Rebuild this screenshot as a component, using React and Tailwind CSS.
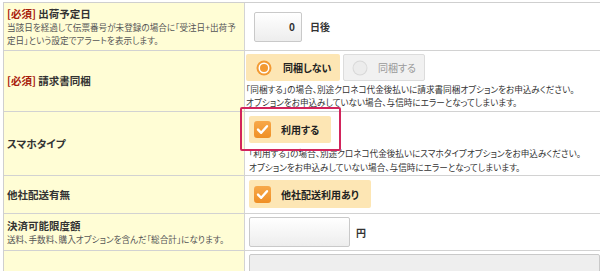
import React from 'react'

const font = "font-['Noto_Sans_CJK_JP','Noto_Sans',sans-serif] [font-feature-settings:'palt']"

function Radio({ on }) {
  return on ? (
    <svg width="16" height="16" viewBox="0 0 16 16">
      <circle cx="8" cy="8" r="7.5" fill="#f39a33" />
      <circle cx="8" cy="8" r="5.5" fill="#fff" />
      <circle cx="8" cy="8" r="4" fill="#f39a33" />
    </svg>
  ) : (
    <svg width="16" height="16" viewBox="0 0 16 16">
      <circle cx="8" cy="8" r="7.5" fill="#d9d9d9" />
      <circle cx="8" cy="8" r="6.5" fill="#ececec" />
    </svg>
  )
}

function Check() {
  return (
    <svg width="17" height="17" viewBox="0 0 17 17">
      <defs>
        <linearGradient id="cg" x1="0" y1="0" x2="0" y2="1">
          <stop offset="0" stopColor="#f7a84a" />
          <stop offset="1" stopColor="#ef8f25" />
        </linearGradient>
      </defs>
      <rect x="0" y="0" width="17" height="17" rx="3" fill="url(#cg)" />
      <path d="M4 8.6 L7.2 11.8 L13 5.2" fill="none" stroke="#fff" strokeWidth="2.4" strokeLinecap="round" strokeLinejoin="round" />
    </svg>
  )
}

function Label({ req, title, note }) {
  return (
    <div className="flex h-full flex-col justify-center border-r border-[#d4d4d4] bg-[#fffdd5] pl-[3px]">
      <div className="text-[10.5px] leading-[14px] font-semibold text-[#333]">
        {req && <span className="text-[#a8200c]">[必須] </span>}
        {title}
      </div>
      {note && (
        <div className="text-[8.6px] leading-[13px] text-[#555]">{note}</div>
      )}
    </div>
  )
}

function Row({ h, label, children }) {
  return (
    <div className={`grid grid-cols-[241px_1fr] border-b border-[#d2d2d2] ${h}`}>
      {label}
      <div className="bg-white">{children}</div>
    </div>
  )
}

export default function App() {
  return (
    <div className={`relative h-[271px] w-[600px] overflow-hidden bg-white text-[#333] ${font}`}>
      <div className="ml-[3px] mt-[2px] border-l border-t border-[#cfcfcf]">
        <Row
          h="h-[48px]"
          label={
            <Label
              req
              title="出荷予定日"
              note={<>当該日を経過して伝票番号が未登録の場合に「受注日+出荷予<br />定日」という設定でアラートを表示します。</>}
            />
          }
        >
          <div className="flex h-full items-center pl-[9px]">
            <div className="flex h-[30px] w-[48px] items-center justify-end rounded-[2px] border border-[#c9c9c9] bg-gradient-to-b from-white to-[#ededed] pr-[6px] text-[10px] font-semibold">
              0
            </div>
            <span className="ml-[8px] text-[10px] font-semibold">日後</span>
          </div>
        </Row>

        <Row h="h-[61px]" label={<Label req title="請求書同梱" />}>
          <div className="pl-[1px] pt-[3px]">
            <div className="flex gap-[3px]">
              <div className="flex h-[27px] w-[94px] items-center rounded-[2px] bg-[#fde6b4] pl-[10px]">
                <Radio on />
                <span className="ml-[11px] text-[10px] font-bold text-[#222]">同梱しない</span>
              </div>
              <div className="flex h-[27px] w-[82px] items-center rounded-[2px] border border-[#dcdcdc] bg-[#f1f1f1] pl-[8px]">
                <Radio />
                <span className="ml-[10px] text-[10px] text-[#9a9a9a]">同梱する</span>
              </div>
            </div>
            <div className="mt-[2px] text-[8.6px] leading-[13px] text-[#333]">
              「同梱する」の場合、別途クロネコ代金後払いに請求書同梱オプションをお申込みください。
              <br />
              オプションをお申込みしていない場合、与信時にエラーとなってしまいます。
            </div>
          </div>
        </Row>

        <Row h="h-[64px]" label={<Label title="スマホタイプ" />}>
          <div className="pl-[4px] pt-[4px]">
            <div className="flex h-[27px] w-[82px] items-center rounded-[2px] bg-[#fde6b4] pl-[5px]">
              <Check />
              <span className="ml-[10px] text-[10px] font-bold text-[#222]">利用する</span>
            </div>
            <div className="mt-[3px] text-[8.6px] leading-[14px] text-[#333]">
              「利用する」の場合、別途クロネコ代金後払いにスマホタイプオプションをお申込みください。
              <br />
              オプションをお申込みしていない場合、与信時にエラーとなってしまいます。
            </div>
          </div>
        </Row>

        <Row h="h-[38px]" label={<Label title="他社配送有無" />}>
          <div className="pl-[4px] pt-[4px]">
            <div className="flex h-[28px] w-[122px] items-center rounded-[2px] bg-[#fde6b4] pl-[5px]">
              <Check />
              <span className="ml-[10px] text-[10px] font-bold text-[#222]">他社配送利用あり</span>
            </div>
          </div>
        </Row>

        <Row
          h="h-[37px]"
          label={<Label title="決済可能限度額" note="送料、手数料、購入オプションを含んだ「総合計」になります。" />}
        >
          <div className="flex items-center pl-[4px] pt-[3px]">
            <div className="h-[30px] w-[101px] rounded-[2px] border border-[#c9c9c9] bg-gradient-to-b from-white to-[#ededed]" />
            <span className="ml-[6px] text-[10px] font-semibold">円</span>
          </div>
        </Row>

        <Row h="h-[40px]" label={<Label title="" />}>
          <div className="pl-[4px] pt-[3px]">
            <div className="h-[30px] w-full rounded-[2px] border border-[#c9c9c9] bg-[#eeeeee]" />
          </div>
        </Row>
      </div>

      <div className="absolute left-[240px] top-[107px] h-[44px] w-[101px] rounded-[2px] border-2 border-[#d2245c]" />
    </div>
  )
}
